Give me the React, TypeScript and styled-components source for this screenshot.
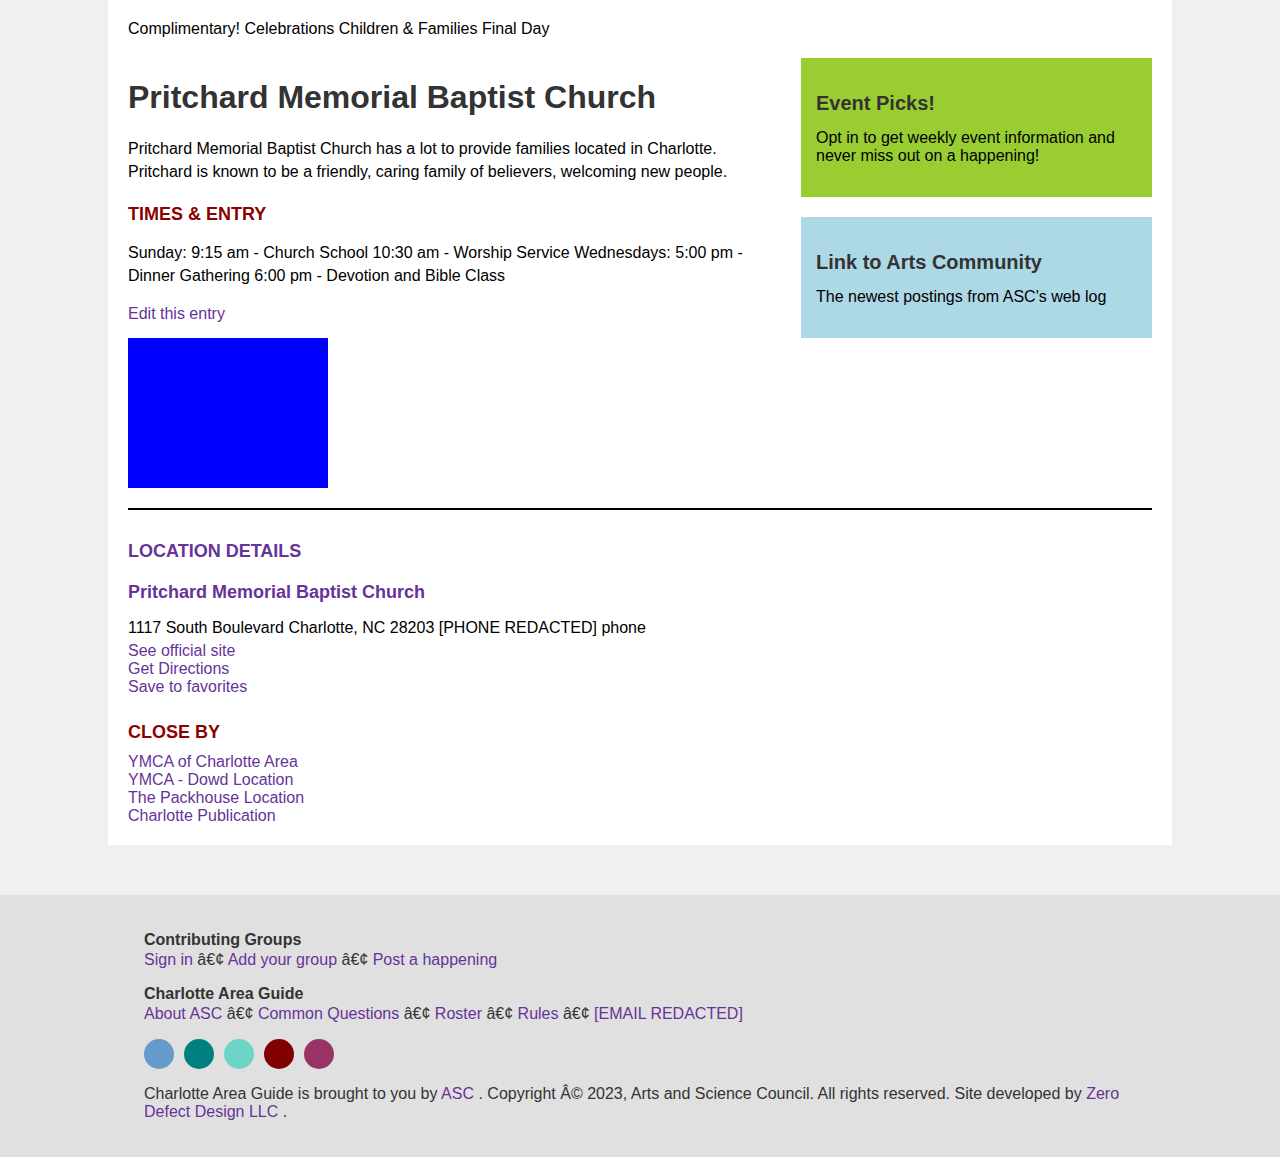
import styled, { createGlobalStyle } from 'styled-components';

const GlobalStyle = createGlobalStyle`
  html, body {
    margin: 0;
    padding: 0;
  }
  body {
    background: #f0f0f0;
    font-family: "Liberation Sans", Arial, sans-serif;
    font-size: 16px;
    color: #000;
  }
  a {
    color: #663399;
    text-decoration: none;
  }
`;

const Page = styled.div`
  width: 1064px;
  margin: 0 auto 50px;
  background: #fff;
  padding: 20px;
  box-sizing: border-box;
`;

const Promo = styled.div`
  line-height: 18px;
  margin-bottom: 20px;
`;

const Layout = styled.div`
  display: grid;
  grid-template-columns: 1fr 351px;
  column-gap: 30px;
  align-items: start;
`;

const Main = styled.main`
  min-width: 0;
`;

const Title = styled.h1`
  font-size: 32px;
  line-height: 1.2;
  color: #333;
  margin: 20px 0 22px;
`;

const Text = styled.p`
  line-height: 1.4;
  margin: 0;
`;

const SectionTitle = styled.h3<{ $tone: 'red' | 'purple' }>`
  font-size: 18px;
  line-height: 1.4;
  text-transform: uppercase;
  color: ${p => (p.$tone === 'red' ? '#8b0000' : '#663399')};
  margin: 19px 0 15px;
`;

const EditLine = styled.div`
  line-height: 1.4;
  margin: 16px 0 12px;
`;

const MapBox = styled.div`
  width: 200px;
  height: 150px;
  background: #0000ff;
`;

const Sidebar = styled.aside`
  display: flex;
  flex-direction: column;
  gap: 20px;
`;

const SideCard = styled.div<{ $bg: string }>`
  background: ${p => p.$bg};
  padding: 15px;
  h3 {
    font-size: 20px;
    line-height: 23px;
    color: #333;
    margin: 19px 0 14px;
  }
  p {
    line-height: 18px;
    margin: 0 0 17px;
  }
`;

const Divider = styled.hr`
  border: 0;
  height: 2px;
  background: #000;
  margin: 20px 0 29px;
`;

const Location = styled.section`
  ${SectionTitle}:first-child {
    margin-top: 0;
  }
`;

const PlaceName = styled.h4`
  font-size: 18px;
  line-height: 1.4;
  color: #663399;
  margin: 16px 0 12px;
`;

const Address = styled.p`
  line-height: 1.4;
  margin: 0 0 3px;
`;

const LinkList = styled.div`
  display: flex;
  flex-direction: column;
  line-height: 18px;
`;

const CloseTitle = styled(SectionTitle)`
  margin: 24px 0 8px;
`;

const Footer = styled.footer`
  background: #e0e0e0;
  color: #333;
  padding: 36px 0 37px;
`;

const FooterInner = styled.div`
  max-width: 1024px;
  margin: 0 auto;
  padding: 0 16px;
  box-sizing: border-box;
  line-height: 18px;
`;

const FooterGroup = styled.div`
  margin-bottom: 16px;
`;

const FooterHeading = styled.div`
  font-weight: bold;
  margin-bottom: 2px;
`;

const Swatches = styled.div`
  display: flex;
  gap: 10px;
  margin: 16px 0;
`;

const Swatch = styled.span<{ $color: string }>`
  width: 30px;
  height: 30px;
  border-radius: 50%;
  background: ${p => p.$color};
`;

const SEP = ' \u00e2\u20ac\u00a2 ';

const swatchColors = ['#6699cc', '#008080', '#6cd5c5', '#800000', '#993366'];

export default function App() {
  return (
    <>
      <GlobalStyle />
      <Page>
        <Promo>Complimentary! Celebrations Children &amp; Families Final Day</Promo>
        <Layout>
          <Main>
            <Title>Pritchard Memorial Baptist Church</Title>
            <Text>
              Pritchard Memorial Baptist Church has a lot to provide families located in Charlotte.
              Pritchard is known to be a friendly, caring family of believers, welcoming new people.
            </Text>
            <SectionTitle $tone="red">Times &amp; Entry</SectionTitle>
            <Text>
              Sunday: 9:15 am - Church School 10:30 am - Worship Service Wednesdays: 5:00 pm -
              Dinner Gathering 6:00 pm - Devotion and Bible Class
            </Text>
            <EditLine>
              <a href="#">Edit this entry</a>
            </EditLine>
            <MapBox />
          </Main>
          <Sidebar>
            <SideCard $bg="#9acd32">
              <h3>Event Picks!</h3>
              <p>Opt in to get weekly event information and never miss out on a happening!</p>
            </SideCard>
            <SideCard $bg="#add8e6">
              <h3>Link to Arts Community</h3>
              <p>The newest postings from ASC's web log</p>
            </SideCard>
          </Sidebar>
        </Layout>
        <Divider />
        <Location>
          <SectionTitle $tone="purple">Location Details</SectionTitle>
          <PlaceName>Pritchard Memorial Baptist Church</PlaceName>
          <Address>1117 South Boulevard Charlotte, NC 28203 [PHONE REDACTED] phone</Address>
          <LinkList>
            <a href="#">See official site</a>
            <a href="#">Get Directions</a>
            <a href="#">Save to favorites</a>
          </LinkList>
          <CloseTitle $tone="red">Close By</CloseTitle>
          <LinkList>
            <a href="#">YMCA of Charlotte Area</a>
            <a href="#">YMCA - Dowd Location</a>
            <a href="#">The Packhouse Location</a>
            <a href="#">Charlotte Publication</a>
          </LinkList>
        </Location>
      </Page>
      <Footer>
        <FooterInner>
          <FooterGroup>
            <FooterHeading>Contributing Groups</FooterHeading>
            <div>
              <a href="#">Sign in</a>{SEP}<a href="#">Add your group</a>{SEP}
              <a href="#">Post a happening</a>
            </div>
          </FooterGroup>
          <FooterGroup>
            <FooterHeading>Charlotte Area Guide</FooterHeading>
            <div>
              <a href="#">About ASC</a>{SEP}<a href="#">Common Questions</a>{SEP}
              <a href="#">Roster</a>{SEP}<a href="#">Rules</a>{SEP}
              <a href="#">[EMAIL REDACTED]</a>
            </div>
          </FooterGroup>
          <Swatches>
            {swatchColors.map(c => (
              <Swatch key={c} $color={c} />
            ))}
          </Swatches>
          <div>
            Charlotte Area Guide is brought to you by <a href="#">ASC</a> . Copyright {'\u00c2\u00a9'} 2023,
            Arts and Science Council. All rights reserved. Site developed by{' '}
            <a href="#">Zero Defect Design LLC</a> .
          </div>
        </FooterInner>
      </Footer>
    </>
  );
}
